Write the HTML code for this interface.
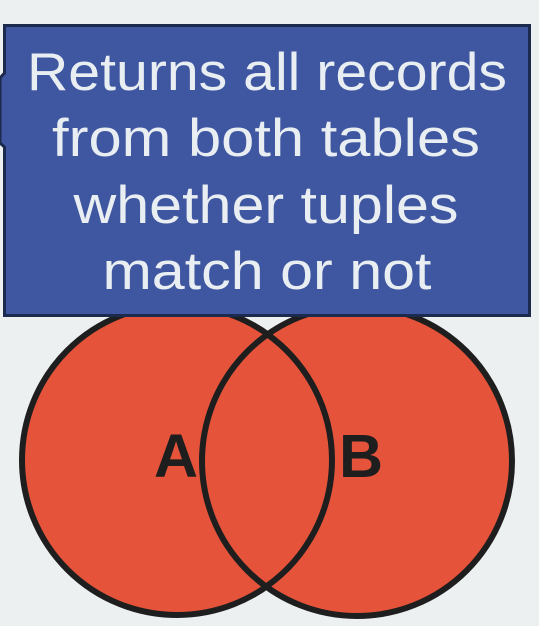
<!DOCTYPE html>
<html><head><style>
html,body{margin:0;padding:0;background:#ecf0f1;width:539px;height:626px;overflow:hidden}
</style></head><body>
<svg width="539" height="626" viewBox="0 0 539 626" xmlns="http://www.w3.org/2000/svg" style="position:absolute;left:0;top:0">
<g stroke="#1e1e1e" stroke-width="6" fill="#e4533a">
<ellipse cx="177" cy="460" rx="155" ry="155"/>
<ellipse cx="357" cy="461" rx="155" ry="155"/>
</g>
<path d="M267,334 A155,155 0 0 1 332,460 A155,155 0 0 1 267,586" fill="none" stroke="#1e1e1e" stroke-width="6"/>
<text x="176" y="477" font-family="Liberation Sans, sans-serif" font-weight="bold" font-size="61" fill="#1e1e1e" text-anchor="middle">A</text>
<text x="361" y="477" font-family="Liberation Sans, sans-serif" font-weight="bold" font-size="61" fill="#1e1e1e" text-anchor="middle">B</text>
<path d="M4.5,25.5 H529.5 V315.5 H4.5 V147 L0,143 V78 L4.5,73 Z" fill="#3f56a0" stroke="#1c2a4e" stroke-width="3"/>
<g font-family="Liberation Sans, sans-serif" font-size="53" fill="#e9eef2" text-anchor="middle">
<text x="267" y="90" textLength="480" lengthAdjust="spacingAndGlyphs">Returns all records</text>
<text x="266" y="156" textLength="428" lengthAdjust="spacingAndGlyphs">from both tables</text>
<text x="266" y="223" textLength="385" lengthAdjust="spacingAndGlyphs">whether tuples</text>
<text x="267" y="289" textLength="329" lengthAdjust="spacingAndGlyphs">match or not</text>
</g>
</svg>
</body></html>
